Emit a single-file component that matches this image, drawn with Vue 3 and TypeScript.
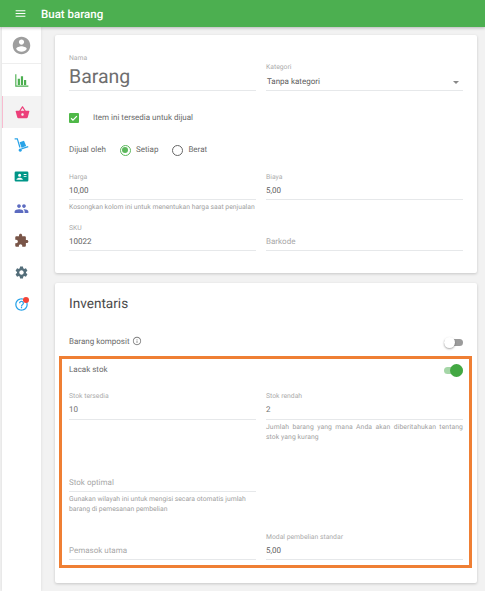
<script setup lang="ts">
// Item editor screen: green app bar, icon rail on the left, two form cards.
interface NavItem {
  key: string
  color: string
  paths: string[]
  active?: boolean
  dot?: boolean
}

const nav: NavItem[] = [
  { key: 'reports', color: '#4caf50', paths: ['M2 2h1.800v18H23v2H2V2z', 'M6 9h3.500v10H6zM11 5h3.500v14H11zM16 11h3.500v8H16z'] },
  {
    key: 'items',
    color: '#ec407a',
    active: true,
    paths: ['M17.21 9l-4.38-6.56c-.19-.28-.51-.42-.83-.42-.32 0-.64.14-.83.43L6.79 9H2c-.55 0-1 .45-1 1 0 .09.01.18.04.27l2.54 9.27c.23.84 1 1.46 1.92 1.46h13c.92 0 1.69-.62 1.93-1.46l2.54-9.27L23 10c0-.55-.45-1-1-1h-4.79zM9 9l3-4.4L15 9H9zm3 8c-1.1 0-2-.9-2-2s.9-2 2-2 2 .9 2 2-.9 2-2 2z'],
  },
  {
    key: 'inventory',
    color: '#29a3e8',
    paths: ['M1 2h5l4.500 14.500-2 .6L4.700 4H1V2z', 'M9 8.500l7-2.500 3.500 8.500-7.500 2.500zM11.500 18l11-3.500.5 2-11 3.500z', 'M10 18.500a2.500 2.500 0 1 0 .01 0z'],
  },
  {
    key: 'customers',
    color: '#009688',
    paths: ['M3 4h18a2 2 0 0 1 2 2v12a2 2 0 0 1-2 2H3a2 2 0 0 1-2-2V6a2 2 0 0 1 2-2zm6 3.500a2.500 2.500 0 1 0 0 5 2.500 2.500 0 0 0 0-5zM4 16.500V17h10v-.5c0-1.700-3.300-2.600-5-2.600s-5 .9-5 2.600zM15.500 8v1.500H20V8h-4.500zm0 3v1.500H20V11h-4.500z'],
  },
  {
    key: 'staff',
    color: '#5c6bc0',
    paths: ['M16 11c1.66 0 2.99-1.34 2.99-3S17.66 5 16 5c-1.66 0-3 1.34-3 3s1.34 3 3 3zm-8 0c1.66 0 2.99-1.34 2.99-3S9.66 5 8 5C6.34 5 5 6.34 5 8s1.34 3 3 3zm0 2c-2.33 0-7 1.17-7 3.5V19h14v-2.5c0-2.33-4.67-3.5-7-3.5zm8 0c-.29 0-.62.02-.97.05 1.16.84 1.97 1.97 1.97 3.45V19h6v-2.5c0-2.33-4.67-3.5-7-3.5z'],
  },
  {
    key: 'apps',
    color: '#795548',
    paths: ['M20.5 11H19V7c0-1.1-.9-2-2-2h-4V3.5C13 2.12 11.88 1 10.5 1S8 2.12 8 3.5V5H4c-1.1 0-1.99.9-1.99 2v3.8H3.5c1.49 0 2.7 1.21 2.7 2.7s-1.21 2.7-2.7 2.7H2V20c0 1.1.9 2 2 2h3.8v-1.5c0-1.49 1.21-2.7 2.7-2.7 1.49 0 2.7 1.21 2.7 2.7V22H17c1.1 0 2-.9 2-2v-4h1.5c1.38 0 2.5-1.12 2.5-2.5S21.88 11 20.5 11z'],
  },
  {
    key: 'settings',
    color: '#546e7a',
    paths: ['M19.14 12.94c.04-.3.06-.61.06-.94 0-.32-.02-.64-.07-.94l2.03-1.58c.18-.14.23-.41.12-.61l-1.92-3.32c-.12-.22-.37-.29-.59-.22l-2.39.96c-.5-.38-1.03-.7-1.62-.94l-.36-2.54c-.04-.24-.24-.41-.48-.41h-3.84c-.24 0-.43.17-.47.41l-.36 2.54c-.59.24-1.13.57-1.62.94l-2.39-.96c-.22-.08-.47 0-.59.22L2.74 8.87c-.12.21-.08.47.12.61l2.03 1.58c-.05.3-.09.63-.09.94s.02.64.07.94l-2.03 1.58c-.18.14-.23.41-.12.61l1.92 3.32c.12.22.37.29.59.22l2.39-.96c.5.38 1.03.7 1.62.94l.36 2.54c.05.24.24.41.48.41h3.84c.24 0 .44-.17.47-.41l.36-2.54c.59-.24 1.13-.56 1.62-.94l2.39.96c.22.08.47 0 .59-.22l1.92-3.32c.12-.22.07-.47-.12-.61l-2.01-1.58zM12 15.6c-1.98 0-3.6-1.62-3.6-3.6s1.62-3.6 3.6-3.6 3.6 1.62 3.6 3.6-1.62 3.6-3.6 3.6z'],
  },
  {
    key: 'help',
    color: '#29a3e8',
    dot: true,
    paths: ['M11 18h2v-2h-2v2zm1-16C6.48 2 2 6.48 2 12s4.48 10 10 10 10-4.48 10-10S17.52 2 12 2zm0 18c-4.41 0-8-3.59-8-8s3.59-8 8-8 8 3.59 8 8-3.59 8-8 8zm0-14c-2.21 0-4 1.79-4 4h2c0-1.1.9-2 2-2s2 .9 2 2c0 2-3 1.75-3 5h2c0-2.25 3-2.5 3-5 0-2.21-1.79-4-4-4z'],
  },
]
</script>

<template>
  <div class="app">
    <header class="bar">
      <svg class="menu" viewBox="0 0 24 24"><path d="M3 18h18v-2H3v2zm0-5h18v-2H3v2zm0-7v2h18V6H3z" /></svg>
      <span class="bar-title">Buat barang</span>
    </header>

    <div class="body">
      <nav class="rail">
        <div class="rail-account">
          <svg class="avatar" viewBox="0 0 24 24">
            <path d="M12 2C6.48 2 2 6.48 2 12s4.48 10 10 10 10-4.48 10-10S17.52 2 12 2zm0 3c1.66 0 3 1.34 3 3s-1.34 3-3 3-3-1.34-3-3 1.34-3 3-3zm0 14.2c-2.5 0-4.71-1.28-6-3.22.03-1.99 4-3.08 6-3.08 1.99 0 5.97 1.09 6 3.08-1.29 1.94-3.5 3.22-6 3.22z" />
          </svg>
        </div>
        <div v-for="item in nav" :key="item.key" class="rail-item" :class="{ active: item.active }">
          <span class="rail-icon">
            <svg viewBox="0 0 24 24" :style="{ fill: item.color }">
              <path v-for="p in item.paths" :key="p" :d="p" />
            </svg>
            <i v-if="item.dot" class="rail-dot"></i>
          </span>
        </div>
      </nav>

      <main class="main">
        <section class="card card-item">
          <div class="row row-name">
            <div class="field">
              <label class="label">Nama</label>
              <div class="name-value">Barang</div>
            </div>
            <div class="field">
              <label class="label">Kategori</label>
              <div class="value select-value">
                <span>Tanpa kategori</span>
                <i class="caret"></i>
              </div>
            </div>
          </div>

          <div class="check-row">
            <span class="checkbox">
              <svg viewBox="0 0 24 24"><path d="M5 12.5l4.5 4.500L19 7.500" /></svg>
            </span>
            <span class="text">Item ini tersedia untuk dijual</span>
          </div>

          <div class="radio-row">
            <span class="text">Dijual oleh</span>
            <span class="radio on"><i></i></span>
            <span class="text">Setiap</span>
            <span class="radio"></span>
            <span class="text">Berat</span>
          </div>

          <div class="row row-price">
            <div>
              <div class="field">
                <label class="label">Harga</label>
                <div class="value">10,00</div>
              </div>
              <p class="hint nowrap">Kosongkan kolom ini untuk menentukan harga saat penjualan</p>
            </div>
            <div class="field">
              <label class="label">Biaya</label>
              <div class="value">5,00</div>
            </div>
          </div>

          <div class="row row-sku">
            <div class="field">
              <label class="label">SKU</label>
              <div class="value">10022</div>
            </div>
            <div class="field">
              <div class="value placeholder">Barkode</div>
            </div>
          </div>
        </section>

        <section class="card card-stock">
          <h2 class="card-title">Inventaris</h2>

          <div class="toggle-row">
            <span class="text">
              Barang komposit
              <svg class="info" viewBox="0 0 24 24">
                <path d="M11 7h2v2h-2zm0 4h2v6h-2zm1-9C6.48 2 2 6.48 2 12s4.48 10 10 10 10-4.48 10-10S17.52 2 12 2zm0 18c-4.41 0-8-3.59-8-8s3.59-8 8-8 8 3.59 8 8-3.59 8-8 8z" />
              </svg>
            </span>
            <span class="switch"><i></i></span>
          </div>

          <div class="outlined">
            <div class="toggle-row track-row">
              <span class="text">Lacak stok</span>
              <span class="switch on"><i></i></span>
            </div>

            <div class="row row-stock">
              <div class="field">
                <label class="label">Stok tersedia</label>
                <div class="value muted">10</div>
              </div>
              <div>
                <div class="field">
                  <label class="label">Stok rendah</label>
                  <div class="value muted">2</div>
                </div>
                <p class="hint justified">Jumlah barang yang mana Anda akan diberitahukan tentang stok yang kurang</p>
              </div>
            </div>

            <div class="row row-optimal">
              <div>
                <div class="field">
                  <div class="value placeholder">Stok optimal</div>
                </div>
                <p class="hint">Gunakan wilayah ini untuk mengisi secara otomatis jumlah barang di pemesanan pembelian</p>
              </div>
            </div>

            <div class="row row-supplier">
              <div class="field">
                <div class="value placeholder">Pemasok utama</div>
              </div>
              <div class="field">
                <label class="label">Modal pembelian standar</label>
                <div class="value">5,00</div>
              </div>
            </div>
          </div>
        </section>
      </main>
    </div>
  </div>
</template>

<style>
html,
body {
  margin: 0;
  background: #f2f2f2;
}
</style>

<style scoped>
.app {
  width: 485px;
  height: 591px;
  overflow: hidden;
  display: flex;
  flex-direction: column;
  font-family: Roboto, "Liberation Sans", sans-serif;
  text-rendering: geometricPrecision;
  color: #5f5f5f;
}

.bar {
  flex: 0 0 27px;
  display: flex;
  align-items: center;
  background: #4caf50;
  color: #fff;
  padding-left: 14px;
  box-shadow: 0 1px 3px rgba(0, 0, 0, 0.25);
  position: relative;
}

.menu {
  width: 13px;
  height: 13px;
  fill: #fff;
}

.bar-title {
  margin-left: 14px;
  font-size: 11.5px;
  font-weight: 500;
}

.body {
  flex: 1;
  display: flex;
  min-height: 0;
}

.rail {
  width: 39px;
  margin-left: 2px;
  background: #fff;
  box-shadow: 0 0 3px rgba(0, 0, 0, 0.1);
}

.rail-account {
  height: 37px;
  display: flex;
  align-items: center;
  justify-content: center;
  border-bottom: 1px solid #eee;
  box-sizing: border-box;
}

.avatar {
  width: 21px;
  height: 21px;
  fill: #9e9e9e;
}

.rail-item {
  height: 32px;
  display: flex;
  align-items: center;
  justify-content: center;
  box-sizing: border-box;
}

.rail-item.active {
  background: #f3f3f3;
  border-left: 1px solid #f8bbd0;
}

.rail-icon {
  position: relative;
  display: block;
  width: 15px;
  height: 15px;
}

.rail-icon svg {
  display: block;
  width: 15px;
  height: 15px;
}

.rail-dot {
  position: absolute;
  top: 0;
  right: 0;
  width: 6px;
  height: 6px;
  border-radius: 50%;
  background: #f44336;
}

.main {
  flex: 1;
  min-width: 0;
  padding: 8px 8px 0 14px;
  display: flex;
  flex-direction: column;
  gap: 10px;
}

.card {
  background: #fff;
  border-radius: 2px;
  box-shadow: 0 1px 3px rgba(0, 0, 0, 0.18);
  padding: 0 14px;
  box-sizing: border-box;
}

.card-item {
  height: 238px;
  padding-top: 17px;
}

.card-stock {
  height: 300px;
  padding-top: 12px;
}

.row {
  display: grid;
  grid-template-columns: 187px 197px;
  column-gap: 10px;
  align-items: end;
}

.field {
  border-bottom: 1px solid #e6e8ea;
}

.label {
  display: block;
  padding-top: 1px;
  font-size: 6.8px;
  line-height: 10px;
  color: #ababab;
}

.name-value {
  font-size: 19.5px;
  line-height: 27px;
  color: #6e6e6e;
}

.value {
  font-size: 8px;
  line-height: 12px;
  padding: 3px 0 2px;
  color: #606060;
}

.value.muted {
  padding-bottom: 3px;
  color: #727272;
}

.value.placeholder {
  padding-top: 4px;
  color: #a8a8a8;
}

.select-value {
  display: flex;
  align-items: center;
  justify-content: space-between;
  padding: 4px 4px 2px 1px;
}

.caret {
  width: 0;
  height: 0;
  border-left: 3px solid transparent;
  border-right: 3px solid transparent;
  border-top: 3px solid #888;
}

.text {
  font-size: 8px;
  line-height: 12px;
  color: #6a6a6a;
}

.check-row {
  display: flex;
  align-items: center;
  gap: 14px;
  margin-top: 21px;
}

.checkbox {
  width: 10px;
  height: 10px;
  border-radius: 1px;
  background: #4fb848;
  display: block;
}

.checkbox svg {
  display: block;
  fill: none;
  stroke: #fff;
  stroke-width: 3;
}

.radio-row {
  display: flex;
  align-items: center;
  margin-top: 20px;
}

.radio {
  width: 11px;
  height: 11px;
  box-sizing: border-box;
  border: 1px solid #666;
  border-radius: 50%;
  margin: 0 5px 0 14px;
  display: flex;
  align-items: center;
  justify-content: center;
}

.radio.on {
  border-color: #5cb85c;
}

.radio i {
  width: 6px;
  height: 6px;
  border-radius: 50%;
  background: #5cb85c;
}

.row-price {
  margin-top: 15px;
  align-items: start;
}

.hint {
  margin: 2px 0 0;
  font-size: 6.8px;
  line-height: 10px;
  color: #a0a0a0;
}

.hint.nowrap {
  white-space: nowrap;
}

.hint.justified {
  text-align: justify;
  letter-spacing: 0.08px;
}

.row-sku {
  margin-top: 10px;
}

.card-title {
  margin: 0;
  font-size: 13.6px;
  line-height: 18px;
  font-weight: 400;
  color: #4a4a4a;
}

.toggle-row {
  display: flex;
  align-items: center;
  justify-content: space-between;
  margin-top: 22px;
  height: 14px;
}

.info {
  width: 10px;
  height: 10px;
  margin-left: 0.5px;
  vertical-align: -2px;
  fill: #808080;
}

.switch {
  position: relative;
  width: 19px;
  height: 7px;
  border-radius: 4px;
  background: #9b9b9b;
}

.switch i {
  position: absolute;
  left: 0;
  top: -2px;
  width: 11px;
  height: 11px;
  border-radius: 50%;
  background: #fff;
  box-shadow: 0 1px 2px rgba(0, 0, 0, 0.35);
}

.switch.on {
  background: #a5d6a7;
}

.switch.on i {
  left: auto;
  right: 0;
  top: -3px;
  width: 13px;
  height: 13px;
  background: #43a843;
  box-shadow: none;
}

.outlined {
  margin: 7px -9px 0 -10px;
  padding: 0 6px 0 7px;
  height: 212px;
  box-sizing: border-box;
  border: 3px solid #ef7f34;
}

.track-row {
  margin-top: 4px;
}

.row-stock {
  margin-top: 13px;
  align-items: start;
}

.row-optimal {
  margin-top: 31px;
}

.row-supplier {
  margin-top: 17px;
}
</style>
